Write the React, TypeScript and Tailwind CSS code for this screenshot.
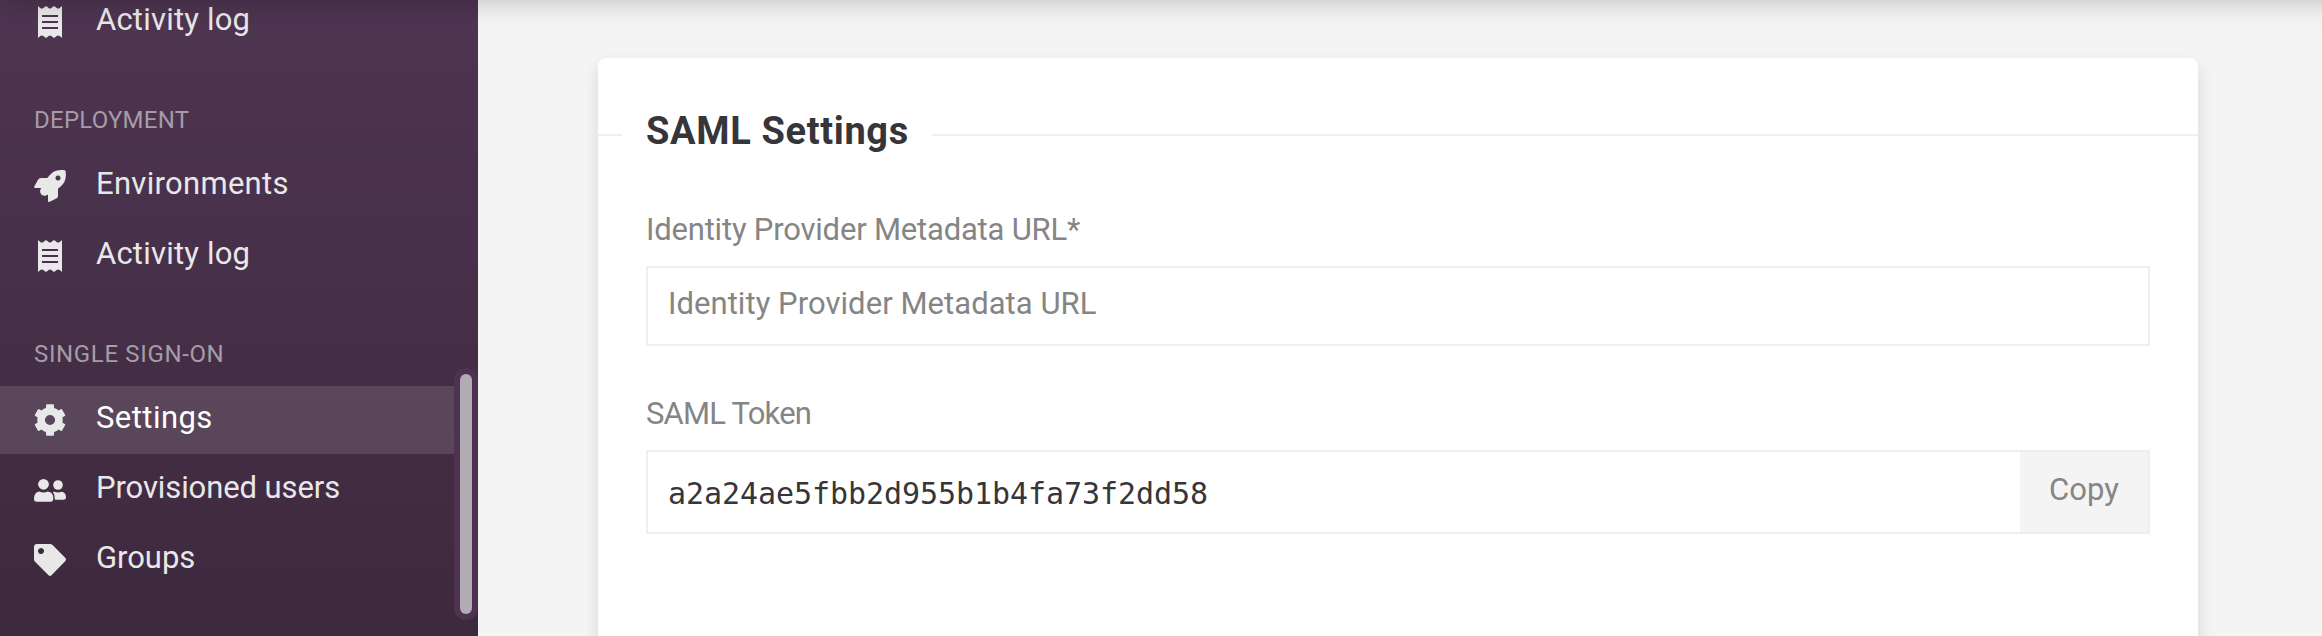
import React from "react";

const ReceiptIcon = () => (
  <svg viewBox="0 0 32 32" className="h-8 w-8 shrink-0 fill-[#e8e8e8]">
    <path
      fillRule="evenodd"
      d="M4 0 L6.2 2 Q8 3 9.4 2 L11.2 .4 Q12 0 12.8 .4 L14.6 2 Q16 3 17.4 2 L19.2 .4 Q20 0 20.8 .4 L22.6 2 Q24 3 25.8 2 L28 0 V32 L25.8 30 Q24 29 22.6 30 L20.8 31.6 Q20 32 19.2 31.6 L17.4 30 Q16 29 14.6 30 L12.8 31.6 Q12 32 11.2 31.6 L9.4 30 Q8 29 6.2 30 L4 32Z M8 9 V11 H24 V9Z M8 15 V17 H24 V15Z M8 21 V23 H24 V21Z"
    />
  </svg>
);

const RocketIcon = () => (
  <svg viewBox="0 0 32 32" className="h-8 w-8 shrink-0 fill-[#e8e8e8]">
    <path
      fillRule="evenodd"
      d="M31.2 .5 C27 -.3 21.500 0 18 3 Q15.500 5 13.300 8 H7 Q5 8 4.200 9.600 L.3 16.500 Q-.4 18 1.200 18 H7.300 Q5.600 20 6.300 22.500 Q7.500 26 11 25.700 Q12.700 25.500 14 24.500 V31 Q14 32.200 15.200 31.900 L22.700 28.300 Q24 27.600 24 26 V18.700 Q27 16.500 29 14 C32 10.500 32.300 5 31.500 .8Z M24 5.500 a2.500 2.500 0 1 0 .01 0Z"
    />
  </svg>
);

const GearIcon = () => (
  <svg viewBox="0 0 32 32" className="h-8 w-8 shrink-0 fill-[#e8e8e8]">
    <rect x="12" y="0.300" width="8" height="10" rx="1" />
    <rect x="12" y="0.300" width="8" height="10" rx="1" transform="rotate(60 16 16)" />
    <rect x="12" y="0.300" width="8" height="10" rx="1" transform="rotate(120 16 16)" />
    <rect x="12" y="0.300" width="8" height="10" rx="1" transform="rotate(180 16 16)" />
    <rect x="12" y="0.300" width="8" height="10" rx="1" transform="rotate(240 16 16)" />
    <rect x="12" y="0.300" width="8" height="10" rx="1" transform="rotate(300 16 16)" />
    <circle cx="16" cy="16" r="8.900" fill="none" stroke="#e8e8e8" strokeWidth="7.600" />
  </svg>
);

const UsersIcon = () => (
  <svg viewBox="0 0 32 32" className="h-8 w-8 shrink-0 fill-[#e8e8e8]">
    <circle cx="9.500" cy="10.300" r="5.400" />
    <path d="M5.200 17.500 Q9.500 19.500 13.800 17.500 Q19.300 18.200 19.300 24.500 Q19.300 27.700 16.500 27.700 H2.800 Q0 27.700 0 25 Q0 18.200 5.200 17.500Z" />
    <circle cx="24" cy="11" r="4.800" />
    <path d="M20.300 17.700 Q24 19.200 27.500 17.700 Q32 18.300 32 23.500 Q32 25.700 29.600 25.700 H20.900 Q21.200 21 18.900 18 Q19.500 17.600 20.300 17.700Z" />
  </svg>
);

const TagIcon = () => (
  <svg viewBox="0 0 32 32" className="h-8 w-8 shrink-0 fill-[#e8e8e8]">
    <path
      fillRule="evenodd"
      d="M3 0 H16 Q17.500 0 18.600 1.100 L31.400 14 Q32.600 15.500 31.400 17 L17.500 31.200 Q16 32.700 14.500 31.200 L1.100 17.800 Q0 16.700 0 15.500 V3 Q0 0 3 0Z M7 4 a3 3 0 1 0 .01 0Z"
    />
  </svg>
);

type NavItemProps = { icon: React.ReactNode; label: string; active?: boolean; spacing: string };

const NavItem = ({ icon, label, active, spacing }: NavItemProps) => (
  <a
    className={`flex h-[68px] w-[454px] shrink-0 items-center gap-[30px] pl-[34px] text-[31px] ${
      active ? "bg-white/12 text-white" : "text-[#e8e8e8]"
    }`}
  >
    {icon}
    <span className={`-mt-[4px] whitespace-nowrap leading-[36px] ${spacing}`}>{label}</span>
  </a>
);

const SectionTitle = ({ label, spacing }: { label: string; spacing: string }) => (
  <h3 className={`flex h-[96px] shrink-0 items-end pb-[17px] pl-[34px] text-[24px] leading-[30px] whitespace-nowrap text-[#a69ba8] ${spacing}`}>
    {label}
  </h3>
);

export default function App() {
  return (
    <div className="relative flex h-[636px] w-[2322px] overflow-hidden bg-[#f4f4f4] font-['Roboto',sans-serif]">
      <nav className="relative flex h-full w-[478px] shrink-0 flex-col overflow-hidden bg-linear-to-b from-[#4e3551] to-[#3d293e]">
        <div className="-mt-[12px] flex flex-col">
          <NavItem icon={<ReceiptIcon />} label="Activity log" spacing="tracking-[0.2px]" />
          <SectionTitle label="DEPLOYMENT" spacing="tracking-[0.25px]" />
          <div className="flex flex-col gap-[2px]">
            <NavItem icon={<RocketIcon />} label="Environments" spacing="tracking-[0.3px]" />
            <NavItem icon={<ReceiptIcon />} label="Activity log" spacing="tracking-[0.2px]" />
          </div>
          <SectionTitle label="SINGLE SIGN-ON" spacing="tracking-[0.65px]" />
          <div className="flex flex-col gap-[2px]">
            <NavItem icon={<GearIcon />} label="Settings" active spacing="tracking-[0.45px]" />
            <NavItem icon={<UsersIcon />} label="Provisioned users" spacing="tracking-[-0.1px]" />
            <NavItem icon={<TagIcon />} label="Groups" spacing="tracking-[-0.05px]" />
          </div>
        </div>
        <div className="absolute top-[368px] right-0 h-[252px] w-[24px] rounded-full bg-[#4c334f] p-[6px]">
          <div className="h-full w-full rounded-full bg-[#b3aab5]" />
        </div>
      </nav>

      <main className="flex flex-1 pt-[58px] pl-[120px]">
        <section className="flex h-[700px] w-[1600px] flex-col rounded-[8px] bg-white pt-[50px] shadow-[0_8px_16px_rgba(0,0,0,0.12)]">
          <div className="flex h-[54px] items-center">
            <div className="h-[2px] w-[24px] bg-[#efefef]" />
            <h2 className="-mt-[8px] w-[310px] pl-[24px] text-[38px] leading-[46px] font-bold tracking-[0.65px] whitespace-nowrap text-[#35353a]">
              SAML Settings
            </h2>
            <div className="h-[2px] flex-1 bg-[#efefef]" />
          </div>
          <div className="flex flex-col px-[48px] pt-[48px]">
            <label className="h-[56px] pt-[2px] text-[31px] leading-[36px] tracking-[-0.2px] whitespace-nowrap text-[#858585]">
              Identity Provider Metadata URL*
            </label>
            <div className="flex h-[80px] items-center border-2 border-[#efefef] pb-[4px] pl-[20px] text-[31px] leading-[36px] tracking-[0.05px] text-[#858585]">
              <span>Identity Provider Metadata URL</span>
            </div>
            <label className="mt-[48px] h-[56px] pt-[2px] text-[31px] leading-[36px] tracking-[-0.8px] whitespace-nowrap text-[#858585]">
              <span>SAML Token</span>
            </label>
            <div className="flex h-[84px] border-2 border-[#efefef]">
              <div className="flex flex-1 items-center pt-[4px] pl-[20px] font-['DejaVu_Sans_Mono',monospace] text-[30px] leading-[36px] tracking-[-0.06px] text-[#35353a]">
                <span>a2a24ae5fbb2d955b1b4fa73f2dd58</span>
              </div>
              <button className="flex w-[128px] items-center justify-center bg-[#f4f4f4] pb-[4px] text-[31px] leading-[36px] tracking-[0.1px] text-[#858585]">
                <span>Copy</span>
              </button>
            </div>
          </div>
        </section>
      </main>

      <div className="pointer-events-none absolute -top-[40px] -right-[60px] left-0 h-[40px] shadow-[0_0_28px_rgba(0,0,0,0.25)]" />
    </div>
  );
}
